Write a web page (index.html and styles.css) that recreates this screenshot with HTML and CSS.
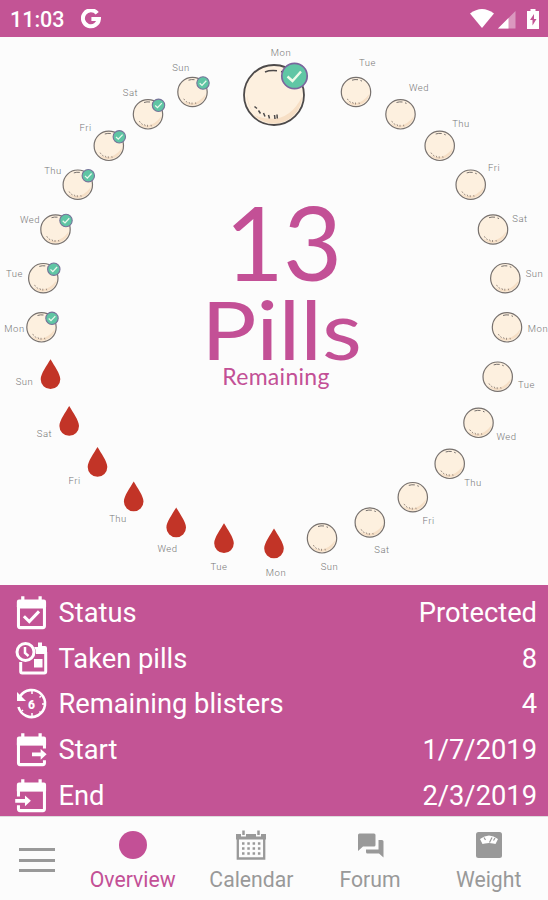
FILE: index.html
```
<!DOCTYPE html>
<html lang="en">
<head>
  <meta charset="UTF-8">
  <meta name="viewport" content="width=device-width, initial-scale=1.0">
  <title>Pill Reminder</title>
  <link rel="stylesheet" href="styles.css">
</head>
<body>
  <header class="status-bar">
    <span class="time">11:03</span>
    <svg class="google" width="20" height="20" viewBox="0 0 20 20"><path d="M16.2 4.3A8 8 0 1 0 17.9 10H10.4" fill="none" stroke="#fff" stroke-width="4"/></svg>
    <svg class="system" width="70" height="22" viewBox="0 0 70 22">
      <path d="M0 5.5Q12 -3.500 24 5.500L12 20z" fill="#fff"/>
      <path d="M28 20.500L45.500 3v17.500z" fill="#fff" opacity=".4"/>
      <path d="M28 20.500L38.500 10v10.500z" fill="#fff"/>
      <path d="M60.500 1h5v2h3.500v18H57V3h3.500z" fill="#fff"/>
      <path d="M64 6l-4 6h2.500v5.500l4-6.500H64z" fill="#c35495"/>
    </svg>
  </header>

  <main class="wheel">
    <svg width="548" height="548" viewBox="0 37 548 548">
      <defs>
        <g id="pill">
          <circle r="14.700" fill="#fdf0df" stroke="#77716e" stroke-width="1.200"/>
          <path d="M13.300 2A13.500 13.500 0 0 1-10 9Q3 16 13.300 2z" fill="#f6dfc6"/>
          <path d="M-4-11.800q3-1 6-.5M4.500-11.500l1.500.6" fill="none" stroke="#77716e" stroke-width="1"/>
          <path d="M-9 7l1.500 1M-6.500 9l1 1.500M-3.500 10l.8 1.800M-.5 10.500v2M3 10.500l.3 1.500" stroke="#94867c" stroke-width=".9"/>
        </g>
        <g id="check">
          <circle r="6.200" fill="#5fc5a4" stroke="#76739a" stroke-width="1.100"/>
          <path d="M-3.300.2L-1 2.400 3.300-2.200" fill="none" stroke="#e9f8ec" stroke-width="1.300"/>
        </g>
        <g id="taken">
          <use href="#pill"/>
          <use href="#check" x="10.500" y="-9"/>
        </g>
        <path id="drop" d="M0-15C3.500-9 9.800-.5 9.800 5A9.800 9.800 0 0 1-9.800 5C-9.800-.5-3.500-9 0-15z" fill="#c23427"/>
      </defs>

      <!-- today -->
      <circle cx="274" cy="95" r="30" fill="#fdf0df" stroke="#4d4a4a" stroke-width="1.800"/>
      <path d="M302 97A28 28 0 0 1 254 115Q286 128 302 97z" fill="#f7dfc5"/>
      <path d="M247 94A28 28 0 0 0 253 112Q248 104 247 94z" fill="#f7dfc5"/>
      <path d="M265 72q5-2 12-1.200M281 71.500l3 .8" fill="none" stroke="#4d4a4a" stroke-width="1.500"/>
      <path d="M254.500 106.500l2.500 2M258.500 110.500l2 3M263.500 113l1.500 3.500M268.500 115l1 3.500M274.500 115l.5 4M277 114.500l.3 4" stroke="#4d4a4a" stroke-width="1.500"/>
      <circle cx="294.500" cy="76" r="12.700" fill="#60c6a5" stroke="#7b659d" stroke-width="1.700"/>
      <path d="M287.500 76.500l5 4.500 8.500-9.500" fill="none" stroke="#eefbe9" stroke-width="2.400"/>

      <use href="#pill" x="356" y="92"/>
      <use href="#pill" x="400.500" y="114.300"/>
      <use href="#pill" x="439.700" y="145.800"/>
      <use href="#pill" x="470.700" y="184.700"/>
      <use href="#pill" x="493" y="229.500"/>
      <use href="#pill" x="505.300" y="278.200"/>
      <use href="#pill" x="507" y="327.300"/>
      <use href="#pill" x="497.700" y="376.700"/>
      <use href="#pill" x="478.500" y="422.800"/>
      <use href="#pill" x="449.700" y="463.800"/>
      <use href="#pill" x="412.800" y="497.200"/>
      <use href="#pill" x="369.800" y="522.500"/>
      <use href="#pill" x="322" y="538.300"/>

      <use href="#drop" x="274" y="543.500"/>
      <use href="#drop" x="224" y="538.300"/>
      <use href="#drop" x="176.200" y="522.500"/>
      <use href="#drop" x="133.700" y="496.500"/>
      <use href="#drop" x="97.500" y="462"/>
      <use href="#drop" x="69.200" y="421"/>
      <use href="#drop" x="50.500" y="374.300"/>

      <use href="#taken" x="41.500" y="327.300"/>
      <use href="#taken" x="43.300" y="278.200"/>
      <use href="#taken" x="55.500" y="229.500"/>
      <use href="#taken" x="77.800" y="184.700"/>
      <use href="#taken" x="108.800" y="145.800"/>
      <use href="#taken" x="148" y="114.300"/>
      <use href="#taken" x="192.500" y="92"/>

      <g class="day">
        <text x="281" y="55.500">Mon</text>
        <text x="367.500" y="66">Tue</text>
        <text x="419" y="91">Wed</text>
        <text x="461" y="126.500">Thu</text>
        <text x="494" y="170.500">Fri</text>
        <text x="520" y="221.500">Sat</text>
        <text x="534.500" y="276.500">Sun</text>
        <text x="538" y="332">Mon</text>
        <text x="526.500" y="387.500">Tue</text>
        <text x="506.500" y="439.500">Wed</text>
        <text x="473" y="485.500">Thu</text>
        <text x="428.500" y="523.500">Fri</text>
        <text x="382" y="552.500">Sat</text>
        <text x="329.500" y="570">Sun</text>
        <text x="276" y="576">Mon</text>
        <text x="219" y="569.500">Tue</text>
        <text x="167.500" y="551.500">Wed</text>
        <text x="118" y="522">Thu</text>
        <text x="74.500" y="483.500">Fri</text>
        <text x="44.500" y="436.500">Sat</text>
        <text x="24.500" y="384.500">Sun</text>
        <text x="14.500" y="331.500">Mon</text>
        <text x="14.500" y="277">Tue</text>
        <text x="30" y="223">Wed</text>
        <text x="53" y="174">Thu</text>
        <text x="85.500" y="130.500">Fri</text>
        <text x="130.500" y="95.500">Sat</text>
        <text x="181" y="70.500">Sun</text>
      </g>

      <g class="remaining">
        <text class="count" x="283" y="280.500">13</text>
        <text class="unit" transform="translate(281.500 359.500) scale(1.125 1)">Pills</text>
        <text class="note" x="276" y="385">Remaining</text>
      </g>
    </svg>
  </main>

  <section class="summary">
    <div class="row">
      <svg class="row-icon" viewBox="1.300 .8 31.400 31.400">
        <path d="M4.500 11h24v17.500a1.500 1.500 0 0 1-1.500 1.500H6a1.500 1.500 0 0 1-1.500-1.500z" fill="none" stroke="#fff" stroke-width="2.800"/>
        <path d="M3 11V6q0-2 2-2h2V1h3v3h13V1h3v3h2q2 0 2 2v5z" fill="#fff"/>
        <path d="M9.500 19.500l5 5 9-9.500" fill="none" stroke="#fff" stroke-width="2.800"/>
      </svg>
      <span class="label">Status</span><span class="value">Protected</span>
    </div>
    <div class="row">
      <svg class="row-icon" viewBox="0 1 34 34">
        <path d="M5.700 21v9.500q0 1.500 1.500 1.500h22q1.500 0 1.500-1.500V11" fill="none" stroke="#fff" stroke-width="3"/>
        <path d="M21 13q0-5-2-7h4V1.500h4V5h3q2 0 2 2v6z" fill="#fff"/>
        <path d="M19 18h8.500v8.500H19z" fill="#fff"/>
        <circle cx="10.500" cy="11" r="8.500" fill="#c35495" stroke="#fff" stroke-width="3"/>
        <path d="M10 6v6l3.500 3" fill="none" stroke="#fff" stroke-width="2.500"/>
      </svg>
      <span class="label">Taken pills</span><span class="value">8</span>
    </div>
    <div class="row">
      <svg class="row-icon" viewBox="0 0 34 34">
        <path d="M5 9.500A13.500 13.500 0 1 1 3.500 20" fill="none" stroke="#fff" stroke-width="2.600"/>
        <path d="M2 5v9h9z" fill="#fff"/>
        <path d="M17 4v3M17 26v4M27 17h3M8 23l-1 1M26 9l-1.500 1.500M24.500 24.500L26 26" stroke="#fff" stroke-width="1.500"/>
        <text x="13" y="21.500" class="icon-number">6</text>
      </svg>
      <span class="label">Remaining blisters</span><span class="value">4</span>
    </div>
    <div class="row">
      <svg class="row-icon" viewBox="1.300 .8 31.400 31.400">
        <path d="M28.500 15V11h-24v17.500a1.500 1.500 0 0 0 1.500 1.500H27a1.500 1.500 0 0 0 1.500-1.500V26" fill="none" stroke="#fff" stroke-width="2.800"/>
        <path d="M3 12V6q0-2 2-2h2V1h3v3h13V1h3v3h2q2 0 2 2v6z" fill="#fff"/>
        <path d="M17 18.800h8V15.500l5.500 5-5.500 5v-3.300h-8z" fill="#fff"/>
      </svg>
      <span class="label">Start</span><span class="value">1/7/2019</span>
    </div>
    <div class="row">
      <svg class="row-icon" viewBox="1.300 .8 31.400 31.400">
        <path d="M4.500 17V11h24v17.500a1.500 1.500 0 0 1-1.500 1.500H6a1.500 1.500 0 0 1-1.500-1.500V25" fill="none" stroke="#fff" stroke-width="2.800"/>
        <path d="M3 12V6q0-2 2-2h2V1h3v3h13V1h3v3h2q2 0 2 2v6z" fill="#fff"/>
        <path d="M1.500 19.300h9V16l5.500 5-5.500 5v-3.300h-9z" fill="#fff"/>
      </svg>
      <span class="label">End</span><span class="value">2/3/2019</span>
    </div>
  </section>

  <nav class="tabs">
    <div class="menu"><i></i><i></i><i></i></div>
    <div class="tab active">
      <svg width="32" height="32" viewBox="0 0 32 32"><circle cx="16" cy="16" r="14"/></svg>
      <span>Overview</span>
    </div>
    <div class="tab">
      <svg width="32" height="32" viewBox="0 0 32 32">
        <path d="M2.800 9v20.500h26.400V9" fill="none" stroke="#999" stroke-width="2.300"/>
        <path d="M1 5h5v2.500h5V5h10v2.500h5V5h5v5.500H1z"/>
        <path d="M8.500 1.500V6M23.500 1.500V6" stroke="#999" stroke-width="2.500"/>
        <path d="M7 14.500h19M7 19.500h19M7 24.500h19" fill="none" stroke="#999" stroke-width="2.300" stroke-dasharray="2.500 2.800"/>
      </svg>
      <span>Calendar</span>
    </div>
    <div class="tab">
      <svg width="32" height="32" viewBox="0 0 32 32">
        <path d="M4 6q0-1.500 1.500-1.500h14.500q1.500 0 1.500 1.500v10q0 1.500-1.500 1.500H9L4 22z"/>
        <path d="M24.500 11H28q1.500 0 1.500 1.500v16L25 24.500H13.500q-1.500 0-1.500-1.500v-2.500h12.500z"/>
      </svg>
      <span>Forum</span>
    </div>
    <div class="tab">
      <svg width="32" height="32" viewBox="0 0 32 32">
        <rect x="3" y="3" width="26" height="26" rx="2.500"/>
        <path d="M7 10q9-7 18 0l-2.500 5-2.500-.5q-4-1.200-8 0l-2.500.5z" fill="#fff"/>
        <path d="M11 8.500l1.500 2.500M16.500 13.500l2.500-5M22 9l-1.500 2.500" stroke="#999" stroke-width="1.200"/>
      </svg>
      <span>Weight</span>
    </div>
  </nav>
</body>
</html>
```
FILE: styles.css
```
body {
  margin: 0;
  width: 548px;
  height: 900px;
  display: flex;
  flex-direction: column;
  overflow: hidden;
  background-color: #fcfcfc;
  font-family: Roboto, sans-serif;
}

svg {
  display: block;
}

.status-bar {
  height: 37px;
  box-sizing: border-box;
  padding: 1px 8px 0 10px;
  display: flex;
  align-items: center;
  background-color: #c35495;
  color: #fff;
}

.time {
  width: 71px;
  font-size: 21.5px;
  font-weight: 500;
}

.system {
  margin-left: auto;
}

.wheel {
  height: 548px;
}

.day {
  font-size: 9.5px;
  font-weight: 300;
  letter-spacing: .5px;
  text-anchor: middle;
  fill: #777;
}

.remaining {
  font-family: Lato, sans-serif;
  text-anchor: middle;
  fill: #c35096;
}

.count {
  font-size: 102px;
  letter-spacing: -1px;
}

.unit {
  font-size: 82px;
}

.note {
  font-size: 23px;
  letter-spacing: .3px;
}

.summary {
  height: 231px;
  box-sizing: border-box;
  padding: 5px 11px 0 15px;
  background-color: #c35495;
  color: #fff;
}

.row {
  height: 45.7px;
  display: flex;
  align-items: center;
  font-size: 27.3px;
}

.row-icon {
  width: 34px;
  height: 34px;
  margin-right: 9.5px;
}

.icon-number {
  font-size: 12px;
  font-weight: 900;
  fill: #fff;
}

.value {
  margin-left: auto;
}

.tabs {
  height: 84px;
  box-sizing: border-box;
  padding-top: 12px;
  border-top: 1px solid #ddd;
  display: flex;
  color: #999;
  fill: #999;
}

.menu {
  width: 36px;
  padding: 19px 18.5px 0 19px;
}

.menu i {
  display: block;
  height: 3px;
  margin-bottom: 7.5px;
  background-color: #999;
}

.tab {
  width: 119px;
  display: flex;
  flex-direction: column;
  align-items: center;
  font-size: 21.2px;
}

.tab span {
  margin-top: 5.5px;
}

.active {
  color: #c35096;
  fill: #c35096;
}
```
